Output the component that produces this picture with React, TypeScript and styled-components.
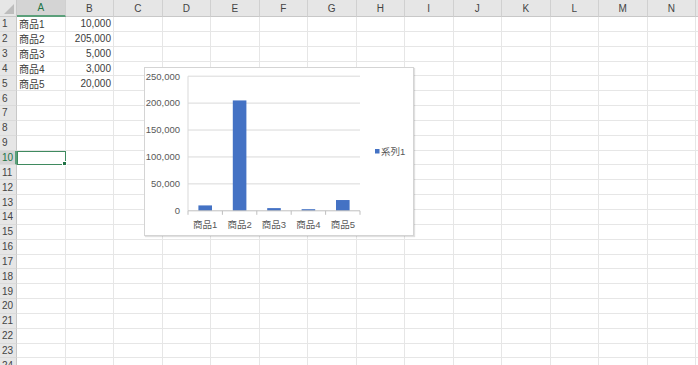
import React from 'react';
import styled, { createGlobalStyle } from 'styled-components';

const GlobalStyle = createGlobalStyle`
  html, body {
    margin: 0;
    padding: 0;
    background: #ffffff;
    overflow: hidden;
  }
  body {
    font-family: "Liberation Sans", "Noto Sans CJK JP", sans-serif;
  }
`;

const COLS = ['A', 'B', 'C', 'D', 'E', 'F', 'G', 'H', 'I', 'J', 'K', 'L', 'M', 'N', ''];
const ROW_COUNT = 24;
const ROW_H = 14.85;
const COL_W = 48.5;

const data = [
  { name: '商品1', value: 10000 },
  { name: '商品2', value: 205000 },
  { name: '商品3', value: 5000 },
  { name: '商品4', value: 3000 },
  { name: '商品5', value: 20000 },
];

const Sheet = styled.div`
  position: relative;
  width: 698px;
  height: 365px;
  overflow: hidden;
  display: grid;
  grid-template-columns: 17px repeat(14, ${COL_W}px) 1fr;
  grid-template-rows: 17px repeat(${ROW_COUNT}, ${ROW_H}px);
  font-size: 10px;
  color: #3c3c3c;
`;

const Corner = styled.div`
  background: #e6e6e6;
  border-right: 1px solid #c8c8c8;
  border-bottom: 1px solid #c8c8c8;
  box-sizing: border-box;
  position: relative;
  &::after {
    content: '';
    position: absolute;
    right: 2px;
    bottom: 2px;
    width: 0;
    height: 0;
    border-left: 10px solid transparent;
    border-bottom: 10px solid #bdbdbd;
  }
`;

const ColHeader = styled.div<{ $active?: boolean }>`
  background: ${(p) => (p.$active ? '#d4d4d4' : '#e6e6e6')};
  color: ${(p) => (p.$active ? '#217346' : '#444444')};
  border-right: 1px solid #d0d0d0;
  border-bottom: ${(p) => (p.$active ? '2px solid #5b9f7a' : '1px solid #c8c8c8')};
  box-sizing: border-box;
  display: flex;
  align-items: center;
  justify-content: center;
  font-size: 10px;
`;

const RowHeader = styled.div<{ $active?: boolean }>`
  background: ${(p) => (p.$active ? '#d4d4d4' : '#e6e6e6')};
  color: ${(p) => (p.$active ? '#217346' : '#444444')};
  border-right: ${(p) => (p.$active ? '2px solid #5b9f7a' : '1px solid #c8c8c8')};
  border-bottom: 1px solid #dadada;
  box-sizing: border-box;
  display: flex;
  align-items: center;
  padding-left: 2px;
  font-size: 10px;
`;

const Cell = styled.div<{ $align?: 'left' | 'right'; $selected?: boolean }>`
  position: relative;
  border-right: 1px solid #e6e6e6;
  border-bottom: 1px solid #e6e6e6;
  box-sizing: border-box;
  display: flex;
  align-items: center;
  justify-content: ${(p) => (p.$align === 'right' ? 'flex-end' : 'flex-start')};
  padding: 0 2px;
  white-space: nowrap;
  ${(p) =>
    p.$selected &&
    `
    outline: 1.5px solid #3f8a5f;
    outline-offset: -1px;
    z-index: 1;
    &::after {
      content: '';
      position: absolute;
      right: -2px;
      bottom: -2px;
      width: 3px;
      height: 3px;
      background: #217346;
      border: 1px solid #ffffff;
    }
  `}
`;

const ChartBox = styled.div`
  position: absolute;
  left: 144px;
  top: 67px;
  width: 270px;
  height: 169px;
  box-sizing: border-box;
  background: #ffffff;
  border: 1px solid #d4d4d4;
  box-shadow: 1px 1px 1px rgba(0, 0, 0, 0.12);
  z-index: 2;
`;

const ChartSvg = styled.svg`
  display: block;
  font-family: "Liberation Sans", "Noto Sans CJK JP", sans-serif;
  font-size: 9.5px;
  fill: #595959;
`;

const BarChart: React.FC = () => {
  const left = 43;
  const right = 215;
  const top = 8.2;
  const bottom = 142.8;
  const max = 250000;
  const plotH = bottom - top;
  const catW = (right - left) / data.length;
  const ticks = [0, 50000, 100000, 150000, 200000, 250000];
  return (
    <ChartSvg width="268" height="167" viewBox="0 0 268 167">
      {ticks.map((t) => {
        const y = bottom - (t / max) * plotH;
        return (
          <g key={t}>
            {t > 0 && <line x1={left} x2={right} y1={y} y2={y} stroke="#d9d9d9" strokeWidth="1" />}
            <text x={35} y={y + 3.3} textAnchor="end">
              {t.toLocaleString('en-US')}
            </text>
          </g>
        );
      })}
      <line x1={left} x2={left} y1={top} y2={bottom} stroke="#d9d9d9" strokeWidth="1" />
      {data.map((d, i) => {
        const cx = left + catW * i + catW / 2;
        const h = (d.value / max) * plotH;
        return (
          <g key={d.name}>
            <rect x={cx - 6.8} y={bottom - h} width={13.6} height={h} fill="#4472c4" />
            <text x={cx} y={159.5} textAnchor="middle">
              {d.name}
            </text>
          </g>
        );
      })}
      <line x1={left} x2={right} y1={bottom} y2={bottom} stroke="#bfbfbf" strokeWidth="1" />
      {data.map((_, i) => {
        const x = left + catW * (i + 1);
        return <line key={i} x1={x} x2={x} y1={bottom} y2={bottom + 4} stroke="#bfbfbf" strokeWidth="1" />;
      })}
      <line x1={left} x2={left} y1={bottom} y2={bottom + 4} stroke="#bfbfbf" strokeWidth="1" />
      <rect x={230} y={81} width={4.5} height={4.5} fill="#4472c4" />
      <text x={236} y={86.8}>系列1</text>
    </ChartSvg>
  );
};

const App: React.FC = () => {
  const rows = Array.from({ length: ROW_COUNT }, (_, i) => i + 1);
  return (
    <>
      <GlobalStyle />
      <Sheet>
        <Corner />
        {COLS.map((c, i) => (
          <ColHeader key={`h${i}`} $active={c === 'A'}>
            {c}
          </ColHeader>
        ))}
        {rows.map((r) => (
          <React.Fragment key={r}>
            <RowHeader $active={r === 10}>{r}</RowHeader>
            {COLS.map((c, ci) => {
              const item = r <= data.length ? data[r - 1] : null;
              let content: string | null = null;
              if (item && ci === 0) content = item.name;
              if (item && ci === 1) content = item.value.toLocaleString('en-US');
              return (
                <Cell key={`${r}-${ci}`} $align={ci === 1 ? 'right' : 'left'} $selected={r === 10 && ci === 0}>
                  {content}
                </Cell>
              );
            })}
          </React.Fragment>
        ))}
        <ChartBox>
          <BarChart />
        </ChartBox>
      </Sheet>
    </>
  );
};

export default App;
